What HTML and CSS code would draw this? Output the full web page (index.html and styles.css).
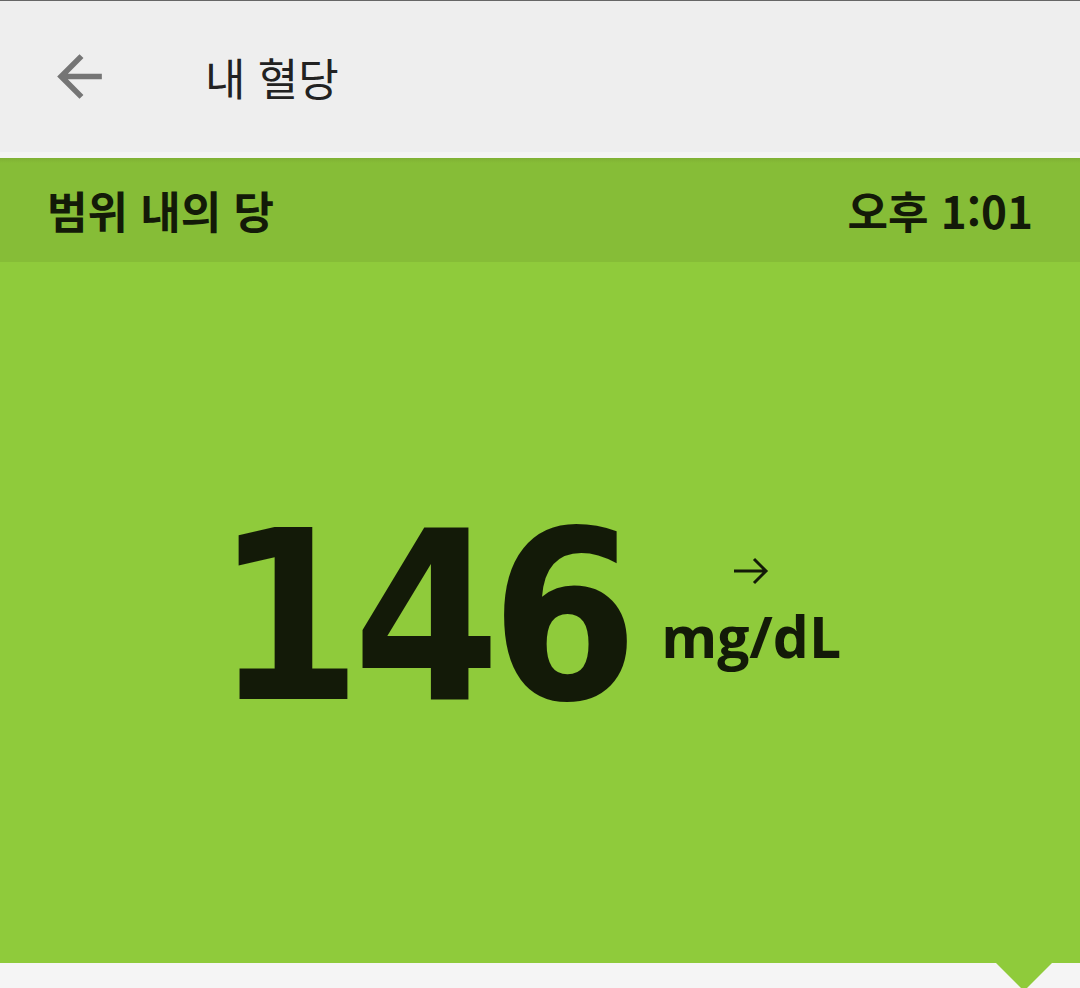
FILE: index.html
```html
<!DOCTYPE html>
<html lang="ko">
<head>
    <meta charset="UTF-8">
    <meta name="viewport" content="width=device-width, initial-scale=1.0">
    <title>내 혈당</title>
    <link rel="stylesheet" href="styles.css">
</head>
<body>
    <div class="screen">
        <header class="app-bar">
            <button class="back-btn" aria-label="뒤로">
                <svg viewBox="0 0 24 24" width="67" height="67">
                    <path d="M20 11H7.83l5.59-5.59L12 4l-8 8 8 8 1.41-1.41L7.83 13H20v-2z" fill="#757575"/>
                </svg>
            </button>
            <h1 class="title">내 혈당</h1>
        </header>
        <div class="app-bar-edge"></div>

        <div class="status-bar">
            <span class="status-label">범위 내의 당</span>
            <span class="status-time">오후 1:01</span>
        </div>

        <main class="reading-panel">
            <div class="reading">
                <span class="value">146</span>
                <div class="unit">
                    <svg class="trend" viewBox="0 0 36 28" width="36" height="28">
                        <path d="M1 14H33M21 2L33 14L21 26" fill="none" stroke="#131a08" stroke-width="3"/>
                    </svg>
                    <span class="unit-text">mg/dL</span>
                </div>
            </div>
        </main>

        <div class="bottom-strip">
            <div class="pointer"></div>
        </div>
    </div>
</body>
</html>
```

FILE: styles.css
```css
body {
    margin: 0;
    background-color: #f5f5f5;
    font-family: "Noto Sans CJK KR", "Noto Sans", sans-serif;
    overflow: hidden;
}
.screen {
    width: 1080px;
    height: 988px;
    display: flex;
    flex-direction: column;
}
.app-bar {
    height: 151px;
    border-top: 1px solid #666;
    background-color: #eeeeee;
    display: flex;
    align-items: center;
}
.back-btn {
    width: 67px;
    height: 67px;
    margin-left: 46px;
    padding: 0;
    border: none;
    background: none;
    display: flex;
}
.title {
    margin: 0 0 0 92px;
    font-size: 44px;
    font-weight: 400;
    color: #222;
    line-height: 1;
}
.app-bar-edge {
    height: 6px;
    background-color: #f4f4f2;
}
.status-bar {
    height: 104px;
    padding: 0 47px;
    background: linear-gradient(#7fb033, #86bd37 5px);
    display: flex;
    align-items: center;
    justify-content: space-between;
    font-size: 44px;
    font-weight: 700;
    color: #131a08;
}
.reading-panel {
    height: 701px;
    background-color: #8fcb3b;
    display: flex;
    align-items: center;
    justify-content: center;
}
.reading {
    padding-right: 24px;
    display: flex;
    align-items: center;
}
.value {
    margin-top: 10px;
    font-family: "DejaVu Sans Condensed", "DejaVu Sans", sans-serif;
    font-stretch: condensed;
    font-size: 235px;
    font-weight: 700;
    line-height: 1;
    letter-spacing: -9px;
    color: #131a08;
}
.unit {
    margin-left: 32px;
    padding-bottom: 5px;
    display: flex;
    flex-direction: column;
    align-items: center;
    gap: 23px;
}
.unit-text {
    font-family: "Open Sans", sans-serif;
    font-size: 57px;
    font-weight: 700;
    line-height: 56px;
    color: #131a08;
}
.bottom-strip {
    flex: 1;
    position: relative;
    background-color: #f5f5f5;
}
.pointer {
    position: absolute;
    top: 0;
    right: 28px;
    width: 0;
    height: 0;
    border-left: 28px solid transparent;
    border-right: 28px solid transparent;
    border-top: 28px solid #8fcb3b;
}
```
